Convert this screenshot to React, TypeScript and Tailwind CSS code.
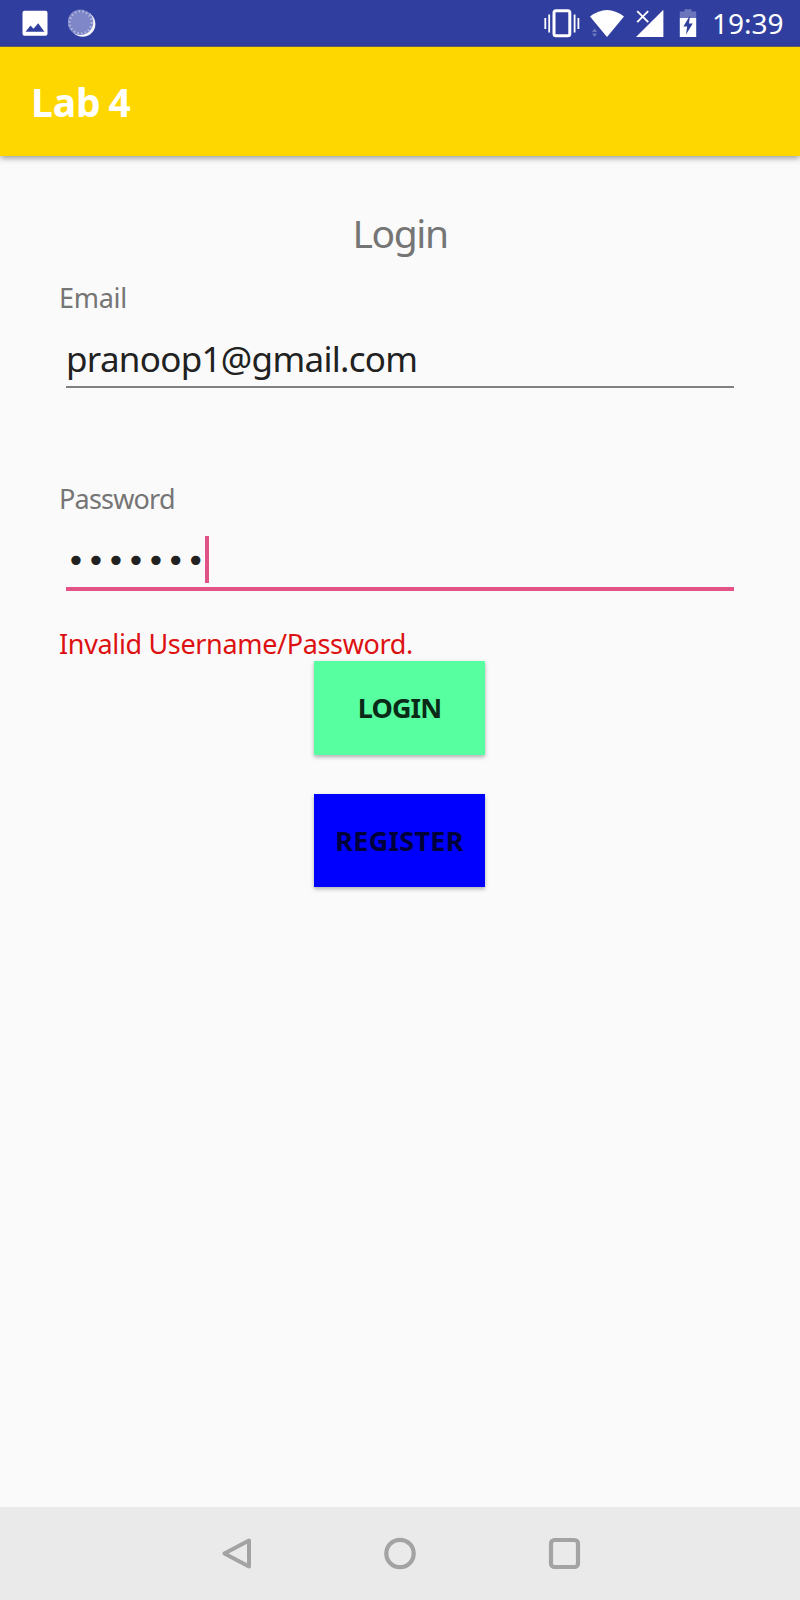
import React from 'react';

function PictureIcon() {
  return (
    <svg width="26" height="26" viewBox="0 0 26 26" className="block">
      <rect x="0.5" y="0.8" width="25" height="25" rx="2" fill="#fff" />
      <path d="M3.6 21.8 L8.5 15.4 L11.5 18.8 L16.2 13.2 L22.4 21.8 Z" fill="#303f9f" />
    </svg>
  );
}

function DialIcon() {
  return (
    <svg width="30" height="30" viewBox="0 0 30 30" className="block">
      <circle cx="14.6" cy="15" r="12.8" fill="#f4f5fb" />
      <circle cx="12.4" cy="13.2" r="12.8" fill="#7d85c6" />
      <circle cx="12.6" cy="13.4" r="11" fill="none" stroke="#aeb4de" strokeWidth="2.4" strokeDasharray="1.6 2.2" />
      <circle cx="12.6" cy="13.4" r="9.2" fill="#7f87c8" />
    </svg>
  );
}

function VibrateIcon() {
  return (
    <svg width="36" height="30" viewBox="544 8 36 30" className="block">
      <rect x="554" y="10.8" width="15.8" height="25" rx="2" fill="none" stroke="#fff" strokeWidth="3" />
      <path d="M545.3 18v11M549.2 14.5v18M574.6 14.5v18M578.4 18v11" stroke="#fff" strokeWidth="1.8" fill="none" />
    </svg>
  );
}

function WifiIcon() {
  return (
    <svg width="36" height="30" viewBox="589 8 36 30" className="block">
      <path d="M590 16.6 Q607 3.6 624 16.6 L607 37 Z" fill="#fff" />
      <path d="M592 32 L594.6 28.4 L597.2 32 Z M592 33.6 L594.6 37 L597.2 33.6 Z" fill="#6c76bc" />
    </svg>
  );
}

function SignalIcon() {
  return (
    <svg width="30" height="30" viewBox="635 8 30 30" className="block">
      <path d="M663.4 9.8 V37 H636 Z" fill="#fff" />
      <path d="M637.2 11.2 L648.2 22.2 M648.2 11.2 L637.2 22.2" stroke="#fff" strokeWidth="1.9" fill="none" />
    </svg>
  );
}

function BatteryIcon() {
  return (
    <svg width="18" height="30" viewBox="679 8 18 30" className="block">
      <path d="M684.5 9.2 h7 v2.3 h4.7 v6.7 h-16.4 v-6.7 h4.7 z" fill="#6c76bc" />
      <path d="M679.8 18 h16.4 v19 h-16.4 z" fill="#fff" />
      <path d="M690 15.6 L683.4 26.4 H687.2 L686 34.6 L692.8 23.6 H689 Z" fill="#303f9f" />
    </svg>
  );
}

function StatusBar() {
  return (
    <header className="flex h-[47px] shrink-0 items-start border-b border-[#6a6470] bg-[#303f9f] text-white">
      <div className="ml-[22px] mt-[10px]"><PictureIcon /></div>
      <div className="ml-[20px] mt-[9px]"><DialIcon /></div>
      <div className="ml-auto flex items-start">
        <div className="mt-2"><VibrateIcon /></div>
        <div className="ml-[9px] mt-2"><WifiIcon /></div>
        <div className="ml-[10px] mt-2"><SignalIcon /></div>
        <div className="ml-[14px] mt-2"><BatteryIcon /></div>
        <span className="ml-[15px] mt-[4px] w-[88px] whitespace-nowrap text-[28px] leading-[39px] tracking-[0px]">19:39</span>
      </div>
    </header>
  );
}

function NavigationBar() {
  return (
    <nav className="flex h-[93px] shrink-0 items-start bg-[#eaeaea] pt-[30px]">
      <svg width="34" height="34" viewBox="0 0 34 34" className="ml-[220px] block">
        <path d="M29 3.6 V29.4 L4.4 16.5 Z" fill="none" stroke="#a3a3a3" strokeWidth="4" strokeLinejoin="round" />
      </svg>
      <svg width="34" height="34" viewBox="0 0 34 34" className="ml-[129px] block">
        <circle cx="17" cy="16.5" r="13.7" fill="none" stroke="#a3a3a3" strokeWidth="4.2" />
      </svg>
      <svg width="34" height="34" viewBox="0 0 34 34" className="ml-[130px] block">
        <rect x="4" y="3" width="27" height="27" rx="3.6" fill="none" stroke="#a3a3a3" strokeWidth="4.2" />
      </svg>
    </nav>
  );
}

export default function App() {
  return (
    <div className="flex h-[1600px] w-[800px] flex-col overflow-hidden bg-[#fafafa] font-['Noto_Sans',sans-serif]">
      <StatusBar />
      <div className="flex h-[109px] shrink-0 items-start bg-[#ffd700] pl-[31px] pt-[28px] shadow-[0_2px_6px_rgba(0,0,0,0.4)]">
        <h1 className="text-[39px] font-bold leading-[54px] tracking-[-0.1px] [word-spacing:-2px] text-white">Lab 4</h1>
      </div>
      <main className="flex grow flex-col pt-[50px]">
        <h2 className="text-center text-[39px] leading-[54px] tracking-[-1.4px] text-[#757575]">Login</h2>
        <div className="mt-[19px] pl-[59px] text-[27px] leading-[38px] tracking-[-0.3px] text-[#757575]">Email</div>
        <div className="mx-[66px] mt-[18px] h-[53px] border-b-2 border-[#818181] text-[35px] leading-[48px] tracking-[-0.7px] text-[#212121]">
          pranoop1@gmail.com
        </div>
        <div className="mt-[92px] pl-[59px] text-[27px] leading-[38px] tracking-[-0.8px] text-[#757575]">Password</div>
        <div className="mx-[66px] mt-[18px] flex h-[55px] items-start border-b-4 border-[#e25287]">
          <span className="w-[139px] whitespace-nowrap pl-[0.5px] font-['DejaVu_Sans'] text-[32px] leading-[50px] tracking-[1.1px] text-[#212121]">•••••••</span>
          <span className="h-[47px] w-1 bg-[#e25287]" />
        </div>
        <div className="mt-[34px] h-[36px] pl-[59px] text-[27px] leading-[38px] tracking-[-0.35px] text-[#dd1111]">Invalid Username/Password.</div>
        <button className="ml-[314px] h-[94px] w-[171px] bg-[#57ffa0] pt-px text-[27px] font-bold tracking-[-0.9px] text-[#0a2a18] shadow-[0_2px_4px_rgba(0,0,0,0.3)]">LOGIN</button>
        <button className="ml-[314px] mt-[39px] h-[93px] w-[171px] bg-[#0000ff] pt-[2px] text-[27px] font-bold tracking-[0.3px] text-[#00003a] shadow-[0_2px_4px_rgba(0,0,0,0.3)]">REGISTER</button>
      </main>
      <NavigationBar />
    </div>
  );
}
